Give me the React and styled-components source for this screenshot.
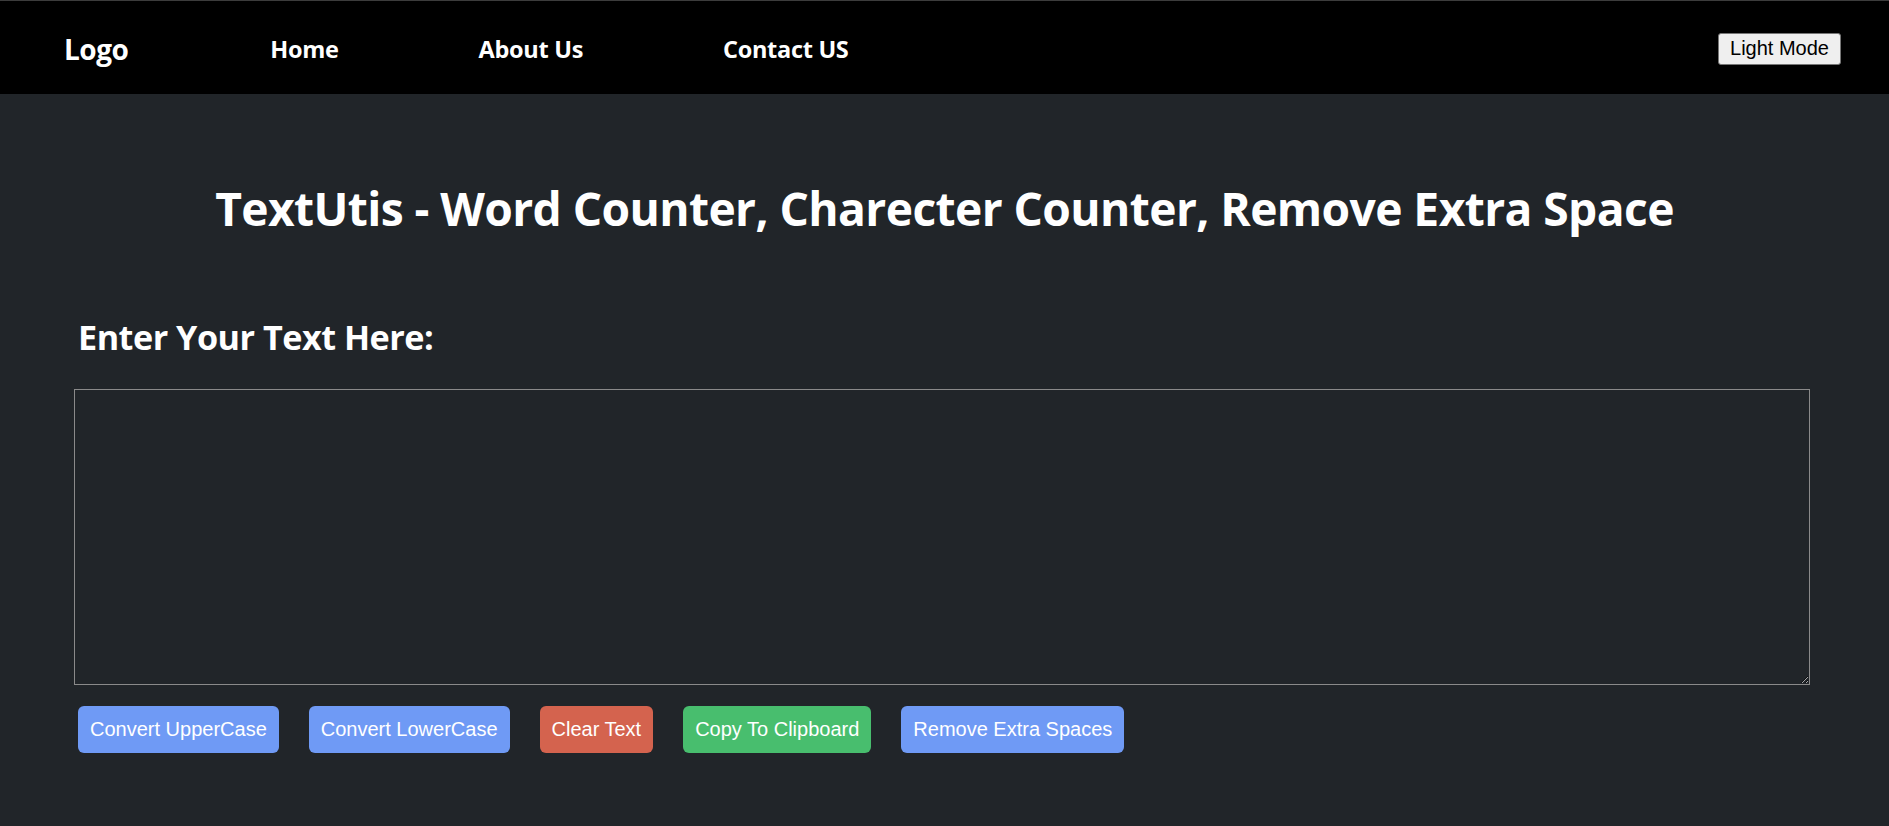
import styled, { createGlobalStyle } from "styled-components";

const GlobalStyle = createGlobalStyle`
    body {
        margin: 0;
        background: #212529;
        font-family: "Open Sans", "Noto Sans", sans-serif;
    }
`;

const buttons = [
    { label: "Convert UpperCase", tone: "blue" },
    { label: "Convert LowerCase", tone: "blue" },
    { label: "Clear Text", tone: "red" },
    { label: "Copy To Clipboard", tone: "green" },
    { label: "Remove Extra Spaces", tone: "blue" },
];

function App() {
    return (
        <StyledPage>
            <GlobalStyle />
            <StyledNavbar>
                <StyledLogo>Logo</StyledLogo>
                <StyledNavLinks>
                    <a>Home</a>
                    <a>About Us</a>
                    <a>Contact US</a>
                </StyledNavLinks>
                <StyledModeButton>Light Mode</StyledModeButton>
            </StyledNavbar>
            <StyledTitle>
                TextUtis - Word Counter, Charecter Counter, Remove Extra Space
            </StyledTitle>
            <StyledEditor>
                <StyledLabel>Enter Your Text Here:</StyledLabel>
                <StyledTextArea />
                <StyledActions>
                    {buttons.map((button) => (
                        <StyledActionButton key={button.label} tone={button.tone}>
                            {button.label}
                        </StyledActionButton>
                    ))}
                </StyledActions>
            </StyledEditor>
        </StyledPage>
    );
}

export default App;

const tones = {
    blue: "#6f9af5",
    red: "#d4634e",
    green: "#48be6e",
};

const StyledPage = styled.div`
    min-height: 826px;
    background: #212529;
    color: #ffffff;
`;

const StyledNavbar = styled.nav`
    display: flex;
    align-items: center;
    height: 93px;
    padding: 0 48px 0 64px;
    background: #000000;
    border-top: 1px solid #3c3c3c;
`;

const StyledLogo = styled.span`
    font-size: 28px;
    font-weight: 700;
    letter-spacing: -0.5px;
    margin-right: 142px;
    padding-top: 2px;
`;

const StyledNavLinks = styled.div`
    display: flex;
    gap: 140px;
    flex: 1;
    padding-top: 3px;
    a {
        font-size: 23.5px;
        font-weight: 700;
        letter-spacing: -0.3px;
        color: #ffffff;
        text-decoration: none;
    }
`;

const StyledModeButton = styled.button`
    font-family: "Liberation Sans", Arial, sans-serif;
    font-size: 20px;
    color: #000000;
    background: #efefef;
    border: 1px solid #767676;
    border-radius: 3px;
    padding: 3px 11px;
    height: 32px;
    margin-top: 2px;
`;

const StyledTitle = styled.h1`
    margin: 87px 0 0;
    text-align: center;
    font-size: 46.2px;
    line-height: 1.2;
    font-weight: 700;
    letter-spacing: -0.6px;
`;

const StyledEditor = styled.main`
    padding: 0 79px 0 74px;
`;

const StyledLabel = styled.h2`
    margin: 80px 0 0 4px;
    font-size: 34.2px;
    line-height: 1.2;
    font-weight: 700;
    letter-spacing: -0.5px;
`;

const StyledTextArea = styled.textarea`
    display: block;
    box-sizing: border-box;
    width: 100%;
    height: 296px;
    margin-top: 32px;
    background: #212529;
    color: #ffffff;
    border: 1px solid #8a8a8a;
    outline: none;
`;

const StyledActions = styled.div`
    display: flex;
    gap: 30px;
    margin: 21px 0 0 4px;
`;

const StyledActionButton = styled.button`
    font-family: "Liberation Sans", Arial, sans-serif;
    font-size: 20px;
    height: 47px;
    padding: 0 12px;
    color: #ffffff;
    background: ${(props) => tones[props.tone]};
    border: none;
    border-radius: 6px;
`;
